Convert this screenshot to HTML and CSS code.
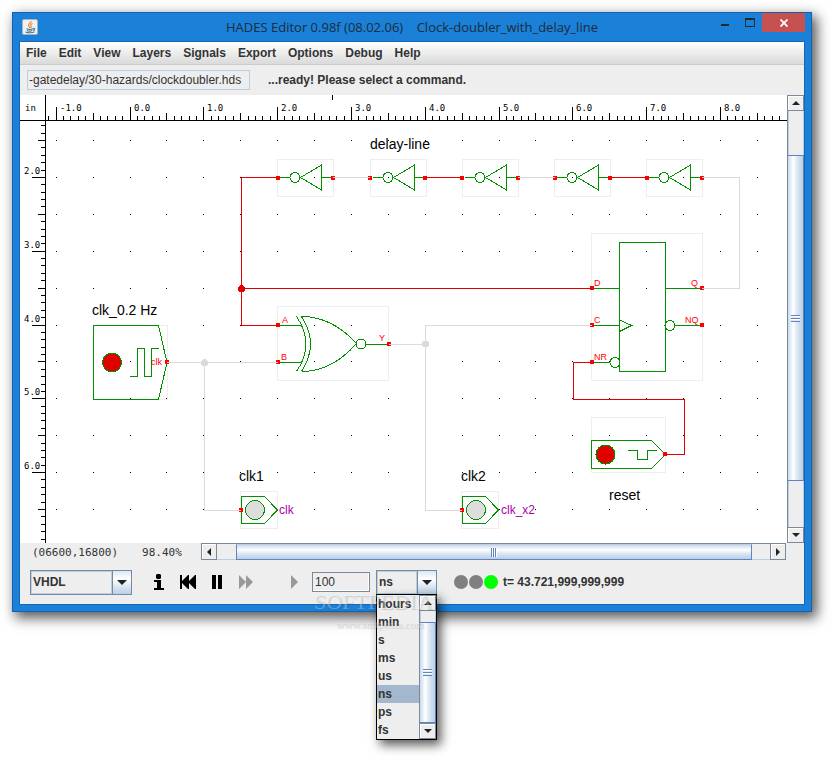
FILE: index.html
```html
<!DOCTYPE html>
<html lang="en">
<head>
<meta charset="utf-8">
<meta name="viewport" content="width=device-width, initial-scale=1">
<title>HADES Editor</title>
<link rel="stylesheet" href="styles.css">
</head>
<body>
<div class="window">
  <header class="titlebar">
    <svg class="app-icon" width="16" height="16" viewBox="0 0 16 16" aria-hidden="true">
      <rect x=".5" y=".5" width="15" height="15" rx="1.5" fill="#eef1f3" stroke="#a9b4bb"/>
      <path d="M9 2C9.500 4 6 4.500 6.500 6.500C6.700 7.600 8 8 7.600 9.200M10.500 4.500C8.500 5.500 8.200 6.500 9 7.300C9.600 8 9 8.700 8.600 9" fill="none" stroke="#ee8a35" stroke-width="1.200"/>
      <path d="M4.500 9.800C6 10.600 9.500 10.500 11 9.800M5 11.500C6.500 12.200 9 12.200 10.200 11.500M3.500 13C6 14.200 10.500 14 12.500 12.800M11 9.300C13.500 9 13.200 11 11 11.400" fill="none" stroke="#4e7896" stroke-width="1.100"/>
    </svg>
    <h1 class="title">HADES Editor 0.98f (08.02.06) &nbsp;&nbsp; Clock-doubler_with_delay_line</h1>
    <div class="caption-buttons">
      <button class="caption" aria-label="Minimize"><svg width="10" height="10"><path d="M1 6H9V8H1Z" fill="#222b33"/></svg></button>
      <button class="caption" aria-label="Maximize"><svg width="10" height="10"><path d="M0 0H10V9H0ZM1 2V8H9V2Z" fill="#222b33" fill-rule="evenodd"/></svg></button>
      <button class="caption close" aria-label="Close"><svg width="8" height="8"><path d="M.5 .5L7.500 7.500M7.500 .5L.5 7.500" stroke="#fff" stroke-width="1.800"/></svg></button>
    </div>
  </header>

  <div class="client">
    <nav class="menubar">
      <button>File</button><button>Edit</button><button>View</button><button>Layers</button><button>Signals</button><button>Export</button><button>Options</button><button>Debug</button><button>Help</button>
    </nav>
    <div class="toolbar">
      <input class="path" type="text" aria-label="Design file" value="-gatedelay/30-hazards/clockdoubler.hds">
      <output class="message">...ready! Please select a command.</output>
    </div>

    <main class="workspace">
      <svg class="schematic" role="img" aria-label="Clock doubler schematic">
        <defs>
          <g id="inverter">
            <path class="bounds" d="M.5 -18.500H56.500V18.500H.5Z"/>
            <path class="part" d="M3 0H13M44.500 0H55M23.500 0L44.500 -12.500V12.500Z"/>
            <circle class="part" cx="18" cy="0" r="5"/>
          </g>
          <g id="pin"><path class="pin" d="M-2 -2H2V2H-2Z"/></g>
          <g id="probe">
            <path class="bounds" d="M.5 -18.500H37.500V18.500H.5Z"/>
            <path class="part" d="M1.500 -13.500H24.500L37.500 0L24.500 13.500H1.500Z"/>
            <circle class="part lamp" cx="15" cy="0" r="9.500"/>
          </g>
        </defs>
        <g transform="translate(-20 -95)">
          <!-- Snap grid -->
          <g class="grid">
            <path d="M55.700 140.500H786M55.700 177.500H786M55.700 214.500H786M55.700 251.500H786M55.700 288.500H786M55.700 325.500H786M55.700 361.500H786M55.700 398.500H786M55.700 435.500H786M55.700 472.500H786M55.700 509.500H786"/>
          </g>

          <!-- Rulers -->
          <path class="rule" d="M20 120.500H787M45.500 95V543M332.500 95V100"/>
          <path class="tick minor" d="M48.320 118H786" stroke-width="4"/>
          <path class="tick half" d="M55.700 116.500H786" stroke-width="7"/>
          <path class="tick major" d="M55.700 113.500H786" stroke-width="13"/>
          <path class="tick minor" d="M43 125.240V543" stroke-width="4"/>
          <path class="tick half" d="M41.500 140V543" stroke-width="7"/>
          <path class="tick major" d="M38.500 176.900V543" stroke-width="13"/>
          <g class="ruler-text">
            <text x="25" y="111">in</text>
            <text x="60" y="111">-1.0</text><text x="134" y="111">0.0</text><text x="207" y="111">1.0</text><text x="281" y="111">2.0</text><text x="355" y="111">3.0</text><text x="429" y="111">4.0</text><text x="503" y="111">5.0</text><text x="576" y="111">6.0</text><text x="650" y="111">7.0</text><text x="724" y="111">8.0</text>
            <text x="24" y="174">2.0</text><text x="24" y="248">3.0</text><text x="24" y="322">4.0</text><text x="24" y="395">5.0</text><text x="24" y="469">6.0</text>
          </g>

          <!-- Components -->
          <use href="#inverter" x="277" y="177.500"/>
          <use href="#inverter" x="370" y="177.500"/>
          <use href="#inverter" x="462" y="177.500"/>
          <use href="#inverter" x="554" y="177.500"/>
          <use href="#inverter" x="646" y="177.500"/>

          <path class="bounds" d="M277.500 306.500H388.500V380.500H277.500Z"/>
          <path class="part" d="M280 325.500H302M280 362.500H302M296.500 316.500Q315.500 344 296.500 371.500M301.500 371.500Q319.500 344 301.500 316.500Q332 316.500 356.500 343.500Q332 371.500 301.500 371.500M366 344.500H387"/>
          <circle class="part" cx="361" cy="344" r="5"/>

          <path class="bounds" d="M591.500 233.500H702.500V380.500H591.500Z"/>
          <path class="part" d="M619.500 242.500H665.500V371.500H619.500ZM594 288.500H619M665 288.500H701M594 325.500H619M675 325.500H701M594 362.500H610M619.500 320L631.500 325.500L619.500 331.500"/>
          <circle class="part" cx="670" cy="325.500" r="5"/>
          <circle class="part" cx="615" cy="362.500" r="5"/>

          <path class="bounds" d="M93.500 325.500H167.500V399.500H93.500Z"/>
          <path class="part" d="M93.500 325.500H158.500L167 362.500L158.500 399.500H93.500ZM130 376.500H137.500V348.500H144.500V376.500H151.500V348.500H159"/>
          <circle class="part active" cx="112" cy="362.500" r="9.500"/>

          <path class="bounds" d="M591.500 417.500H665.500V472.500H591.500Z"/>
          <path class="part" d="M591.500 440.500H651.500L665.500 454.500L651.500 468.500H591.500ZM628 450.500H637.500V459.500H647.500V450.500H657"/>
          <circle class="part active" cx="605.500" cy="454.500" r="9.500"/>

          <use href="#probe" x="240" y="510"/>
          <use href="#probe" x="461" y="510"/>

          <!-- Pins -->
          <use href="#pin" x="278" y="178"/><use href="#pin" x="333" y="178"/>
          <use href="#pin" x="370" y="178"/><use href="#pin" x="425" y="178"/>
          <use href="#pin" x="462" y="178"/><use href="#pin" x="518" y="178"/>
          <use href="#pin" x="555" y="178"/><use href="#pin" x="610" y="178"/>
          <use href="#pin" x="647" y="178"/><use href="#pin" x="702" y="178"/>
          <use href="#pin" x="278" y="325"/><use href="#pin" x="278" y="362"/><use href="#pin" x="389" y="344"/>
          <use href="#pin" x="592" y="288"/><use href="#pin" x="592" y="325"/><use href="#pin" x="592" y="362"/>
          <use href="#pin" x="702" y="288"/><use href="#pin" x="702" y="325"/>
          <use href="#pin" x="167" y="362"/><use href="#pin" x="665" y="454"/>
          <use href="#pin" x="241" y="510"/><use href="#pin" x="462" y="510"/>

          <!-- Nets: low, then high -->
          <path class="net low" d="M333 177.500H370M518 177.500H555M702 177.500H739.500V288.500H702M389 344.500H425.500M592 325.500H425.500V510.500H462M167 362.500H278M204.500 362.500V510.500H241"/>
          <circle class="dot low" cx="204.500" cy="362.500" r="3.500"/>
          <circle class="dot low" cx="425.500" cy="344" r="3.500"/>
          <path class="net high" d="M278 177.500H241.500V325.500H278M241 288.500H592M425 177.500H462M610 177.500H647M592 362.500H573.500V399.500H684.500V454.500H665"/>
          <circle class="dot high" cx="241.500" cy="288.500" r="3.500"/>

          <g class="pin-text">
            <text x="282" y="323">A</text><text x="281" y="360">B</text><text x="379" y="341">Y</text>
            <text x="594" y="286">D</text><text x="594" y="323">C</text><text x="594" y="360">NR</text>
            <text x="691" y="286">Q</text><text x="685" y="323">NQ</text><text x="151" y="365">clk</text>
          </g>
          <g class="name-text">
            <text x="370" y="149">delay-line</text><text x="92" y="315">clk_0.2 Hz</text>
            <text x="239" y="481">clk1</text><text x="461" y="481">clk2</text><text x="609" y="500">reset</text>
          </g>
          <g class="signal-text">
            <text x="279" y="514">clk</text><text x="501" y="514">clk_x2</text>
          </g>
        </g>
      </svg>
      <div class="scrollbar vertical main-vertical">
        <button class="arrow" aria-label="Scroll up"><svg width="8" height="4"><path d="M0 4L4 0L8 4Z"/></svg></button>
        <div class="track before"></div>
        <div class="knob"><i class="grip"></i></div>
        <div class="track after"></div>
        <button class="arrow" aria-label="Scroll down"><svg width="8" height="4"><path d="M0 0L4 4L8 0Z"/></svg></button>
      </div>
    </main>

    <div class="statusbar">
      <div class="readout"><span class="coordinates">(06600,16800)</span><span>98.40%</span></div>
      <div class="scrollbar horizontal">
        <button class="arrow" aria-label="Scroll left"><svg width="4" height="8"><path d="M4 0L0 4L4 8Z"/></svg></button>
        <div class="track before"></div>
        <div class="knob"><i class="grip"></i></div>
        <div class="track after"></div>
        <button class="arrow" aria-label="Scroll right"><svg width="4" height="8"><path d="M0 0L4 4L0 8Z"/></svg></button>
      </div>
    </div>

    <footer class="controls">
      <div class="combo language">
        <select aria-label="Language"><option>VHDL</option></select>
        <span class="combo-arrow"><svg width="10" height="5"><path d="M0 0H10L5 5Z"/></svg></span>
      </div>
      <div class="transport">
        <button aria-label="Information"><svg width="10" height="16"><path d="M3 0H6L7 1V4L6 5H3L2 4V1ZM0 6H7V14H10V16H0V14H3V8H0Z"/></svg></button>
        <button aria-label="Rewind"><svg width="16" height="14"><path d="M0 0H2V6L8 0H9V6L15 0H16V14H15L9 8V14H8L2 8V14H0Z"/></svg></button>
        <button aria-label="Pause"><svg width="10" height="14"><path d="M0 0H4V14H0ZM6 0H10V14H6Z"/></svg></button>
        <button class="dim" aria-label="Run"><svg width="14" height="14"><path d="M0 0L7 7V0L14 7L7 14V7L0 14Z"/></svg></button>
      </div>
      <div class="transport step">
        <button class="dim" aria-label="Step"><svg width="8" height="14"><path d="M0 0L7 7L0 14Z"/></svg></button>
      </div>
      <input class="interval" type="text" aria-label="Interval" value="100">
      <div class="combo unit">
        <select aria-label="Time unit"><option>ns</option></select>
        <span class="combo-arrow"><svg width="10" height="5"><path d="M0 0H10L5 5Z"/></svg></span>
        <div class="popup">
          <ul role="listbox" aria-label="Time units">
            <li role="option">hours</li><li role="option">min</li><li role="option">s</li><li role="option">ms</li><li role="option">us</li><li role="option" aria-selected="true">ns</li><li role="option">ps</li><li role="option">fs</li>
          </ul>
          <div class="scrollbar vertical">
            <button class="arrow" aria-label="Scroll list up"><svg width="8" height="4"><path d="M0 4L4 0L8 4Z"/></svg></button>
            <div class="track before"></div>
            <div class="knob"><i class="grip"></i></div>
            <button class="arrow" aria-label="Scroll list down"><svg width="8" height="4"><path d="M0 0L4 4L8 0Z"/></svg></button>
          </div>
        </div>
        <div class="watermark">
          <span class="brand">SOFTPEDIA<sup>™</sup></span>
          <span class="site">www.softpedia.com</span>
        </div>
      </div>
      <div class="lights"><i></i><i></i><i class="on"></i></div>
      <output class="time">t= 43.721,999,999,999</output>
    </footer>
  </div>
</div>
</body>
</html>
```
FILE: styles.css
```css
* { box-sizing: border-box; }

body {
  margin: 0;
  padding: 12px 20px 12px 12px;
  min-height: 100vh;
  background: #fff;
  color: #333;
  font: bold 12px/16px "Liberation Sans", Arial, sans-serif;
}

button, input, select { font: inherit; color: inherit; margin: 0; border-radius: 0; }
button { padding: 0; border: 0; background: none; }
svg { display: block; }

.window {
  border: 1px solid #1462aa;
  background: #1a80d8;
  padding: 0 7px 7px;
  box-shadow: 4px 5px 12px 1px rgba(0, 0, 0, .65);
}

.titlebar {
  display: grid;
  grid-template-columns: minmax(0, 1fr) auto minmax(0, 1fr);
  height: 29px;
}
.app-icon { margin: 6px 0 0 2px; }
.title {
  margin: 0;
  font: 13px/29px "Open Sans", "Noto Sans", sans-serif;
  color: #1d2c3a;
  white-space: nowrap;
}
.caption-buttons { display: flex; justify-content: flex-end; margin-right: -1px; }
.caption {
  display: flex;
  align-items: center;
  justify-content: center;
  width: 25px;
  height: 19px;
}
.caption.close { width: 43px; background: #c75050; }

.client {
  background: #eee;
  box-shadow: 0 0 0 1px #1467b2;
}

.menubar {
  display: flex;
  height: 23px;
  padding-right: 6px;
  border-bottom: 1px solid #ccc;
  background: linear-gradient(#fff, #dadada);
}
.menubar button { padding: 0 6px; }

.toolbar {
  display: flex;
  align-items: center;
  gap: 18px;
  height: 30px;
  padding: 0 7px;
}
.path {
  width: 223px;
  height: 20px;
  padding: 0 1px;
  border: 1px solid #b8cfe5;
  background: #eee;
  font-weight: normal;
}

.workspace { display: flex; background: #fff; }
.schematic { flex: 1; min-width: 0; height: 448px; }
.schematic * { shape-rendering: crispEdges; }
.bounds, .part, .net, .grid, .tick, .rule { fill: none; }
.bounds { stroke: #eee; }
.part { stroke: #009000; }
.lamp { fill: #ddd; }
.active { fill: #e00000; }
.pin { fill: #f00; }
.net.low { stroke: #dadada; }
.net.high { stroke: #e00000; }
.dot.low { fill: #dadada; }
.dot.high { fill: #e00000; }
.rule, .grid, .tick { stroke: #000; }
.grid { stroke-dasharray: 1 35.900; }
.minor { stroke-dasharray: 1 6.380; }
.half { stroke-dasharray: 1 35.900; }
.major { stroke-dasharray: 1 72.800; }
.ruler-text { font: normal 9px "DejaVu Sans Mono", monospace; fill: #000; }
.pin-text { font: normal 9px "Liberation Sans", sans-serif; fill: #f00; }
.name-text { font: normal 14px "Liberation Sans", sans-serif; fill: #000; }
.signal-text { font: normal 12px "Liberation Sans", sans-serif; fill: #aa00aa; }

.scrollbar { display: flex; background: #eee; }
.scrollbar .arrow {
  display: flex;
  flex: none;
  align-items: center;
  justify-content: center;
  border: 1px solid #7a8a99;
  box-shadow: inset 1px 1px #fff;
  background: #eee;
}
.scrollbar svg { fill: #222; }
.track { background: #eee; }
.knob {
  display: flex;
  align-items: center;
  justify-content: center;
  border: 1px solid #6382bf;
}
.vertical { flex: none; flex-direction: column; width: 17px; border-left: 1px solid #7a8a99; }
.vertical .arrow { height: 16px; border-left: 0; }
.vertical .track { border: 1px solid #b8cfe5; border-width: 0 1px; }
.vertical .knob { border-left: 0; background: linear-gradient(90deg, #c8daec, #fff 35%, #dde8f3 60%, #b8cfe5); }
.vertical .grip { width: 9px; height: 7px; background: repeating-linear-gradient(#6382bf 0 1px, #fff 1px 2px, #dde8f3 2px 3px); }
.main-vertical .before { flex: 44; }
.main-vertical .knob { flex: 326; }
.main-vertical .after { flex: 46; }

.statusbar { display: flex; height: 17px; padding-right: 18px; }
.readout {
  display: flex;
  flex: none;
  gap: 24px;
  width: 181px;
  padding: 2px 0 0 12px;
  font: normal 11px/16px "DejaVu Sans Mono", monospace;
}
.horizontal { flex: 1; border-top: 1px solid #7a8a99; }
.horizontal .arrow { width: 16px; border-top: 0; }
.horizontal .before { flex: 19; }
.horizontal .knob { flex: 518; border-top-color: #b8cfe5; background: linear-gradient(#c8daec, #fff 35%, #dde8f3 60%, #b8cfe5); }
.horizontal .after { flex: 18; }
.horizontal .track { border-bottom: 1px solid #b8cfe5; }
.horizontal .grip { width: 6px; height: 9px; background: repeating-linear-gradient(90deg, #6382bf 0 1px, #fff 1px 2px); }

.controls {
  display: flex;
  align-items: center;
  height: 44px;
  padding-left: 10px;
}
.combo {
  position: relative;
  display: flex;
  flex: none;
  height: 25px;
  border: 1px solid #7a8a99;
  background: #eee;
}
.combo select {
  flex: 1;
  min-width: 0;
  padding: 0 1px;
  border: 1px solid #b8cfe5;
  background: #eee;
  appearance: none;
}
.combo-arrow {
  display: flex;
  align-items: center;
  justify-content: center;
  width: 19px;
  border-left: 1px solid #7a8a99;
  background: linear-gradient(#dde8f3, #fff 35%, #b8cfe5);
  pointer-events: none;
}
.combo-arrow svg { fill: #222; }
.language { width: 102px; }
.unit { width: 61px; margin-left: 6px; }

.transport { display: flex; margin-left: 12px; }
.transport button {
  display: flex;
  align-items: center;
  justify-content: center;
  width: 29px;
  height: 24px;
}
.transport .dim { fill: #999; }
.step { margin: 0 3px 0 20px; }
.interval {
  width: 58px;
  height: 20px;
  padding: 0 2px;
  border: 1px solid #7a8a99;
  background: #eee;
  box-shadow: inset -1px -1px #fff;
  font-weight: normal;
}

.popup {
  position: absolute;
  top: 23px;
  left: -1px;
  right: -1px;
  display: flex;
  border: 1px solid #000;
  background: #eee;
  box-shadow: 4px 5px 10px rgba(0, 0, 0, .65);
}
.popup ul { flex: 1; margin: 0; padding: 0; list-style: none; line-height: 18px; }
.popup li { padding-left: 1px; }
.popup [aria-selected] { background: #a3b8cc; }
.popup .before { flex: 12; }
.popup .knob { flex: 99; }

.watermark {
  position: absolute;
  top: 19px;
  left: -63px;
  display: flex;
  flex-direction: column;
  font-family: "Liberation Serif", serif;
  font-weight: normal;
  color: rgba(255, 255, 255, .3);
  text-shadow: 1px 1px 1px rgba(90, 90, 90, .25);
  white-space: nowrap;
  pointer-events: none;
}
.brand { font-size: 22px; line-height: 24px; }
.brand sup { font-size: 8px; line-height: 8px; vertical-align: 8px; }
.site { padding-left: 22px; font-size: 11px; line-height: 20px; }

.lights { display: flex; gap: 1px; margin: 0 5px 0 17px; }
.lights i { width: 14px; height: 14px; border-radius: 50%; background: #808080; }
.lights .on { background: #0f0; }
```
